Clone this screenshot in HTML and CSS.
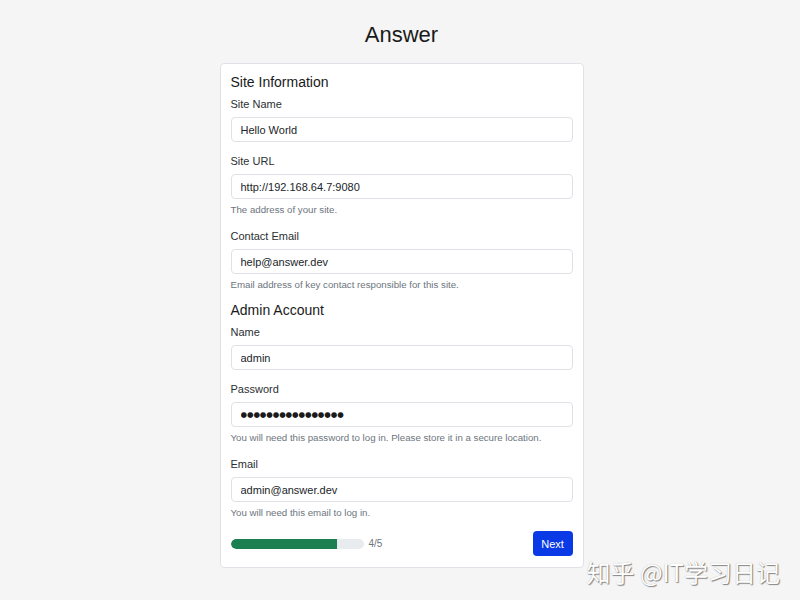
FILE: index.html
```html
<!DOCTYPE html>
<html lang="en">
<head>
<meta charset="utf-8">
<title>Answer</title>
<link rel="stylesheet" href="styles.css">
</head>
<body>
<main class="page">
  <h1 class="title">Answer</h1>
  <form class="card">
    <h2 class="section">Site Information</h2>
    <div class="group">
      <label class="label">Site Name</label>
      <input class="input" type="text" value="Hello World">
    </div>
    <div class="group">
      <label class="label">Site URL</label>
      <input class="input" type="text" value="http://192.168.64.7:9080">
      <div class="help">The address of your site.</div>
    </div>
    <div class="group">
      <label class="label">Contact Email</label>
      <input class="input" type="text" value="help@answer.dev">
      <div class="help">Email address of key contact responsible for this site.</div>
    </div>
    <h2 class="section">Admin Account</h2>
    <div class="group">
      <label class="label">Name</label>
      <input class="input" type="text" value="admin">
    </div>
    <div class="group">
      <label class="label">Password</label>
      <input class="input pw" type="text" value="●●●●●●●●●●●●●●●●">
      <div class="help">You will need this password to log in. Please store it in a secure location.</div>
    </div>
    <div class="group">
      <label class="label">Email</label>
      <input class="input" type="text" value="admin@answer.dev">
      <div class="help">You will need this email to log in.</div>
    </div>
    <div class="footer">
      <div class="progress-wrap">
        <div class="progress"><div class="bar" style="width: 80%"></div></div>
        <span class="step">4/5</span>
      </div>
      <button type="button" class="btn">Next</button>
    </div>
  </form>
</main>
<div class="watermark">知乎 @IT学习日记</div>
</body>
</html>
```

FILE: styles.css
```css
* { box-sizing: border-box; }
html, body {
  margin: 0;
  padding: 0;
  background: #f5f5f5;
  font-family: "Liberation Sans", Arial, sans-serif;
  color: #212529;
}
body { height: 600px; overflow: hidden; position: relative; }
.page {
  padding-top: 21px;
  padding-left: 3px;
  display: flex;
  flex-direction: column;
  align-items: center;
}
.title {
  margin: 0 0 14px;
  font-size: 22px;
  line-height: 28px;
  font-weight: 400;
  color: #1a1a1a;
}
.card {
  width: 364px;
  background: #fff;
  border: 1px solid #dfe2e6;
  border-radius: 4px;
  padding: 9px 10px 11px;
  margin: 0;
}
.section {
  margin: 0 0 5px;
  font-size: 14px;
  line-height: 18px;
  font-weight: 400;
  color: #1a1a1a;
}
.group + .section { margin-top: -2px; }
.group { margin-bottom: 11px; }
.label {
  display: block;
  font-size: 11px;
  line-height: 16px;
  margin-bottom: 5px;
  color: #2b2f33;
}
.input {
  display: block;
  width: 100%;
  height: 25px;
  padding: 0 9px;
  border: 1px solid #dee2e6;
  border-radius: 4px;
  background: #fff;
  font-family: "Liberation Sans", Arial, sans-serif;
  font-size: 11px;
  color: #212529;
  outline: none;
}
.pw {
  font-family: "DejaVu Sans", sans-serif;
  font-size: 7.5px;
  letter-spacing: -0.1px;
  color: #1a1a1a;
}
.help {
  margin-top: 4px;
  font-size: 9.7px;
  line-height: 14px;
  color: #6c757d;
}
.footer {
  display: flex;
  align-items: center;
  justify-content: space-between;
  height: 25px;
}
.progress-wrap {
  display: flex;
  align-items: center;
  gap: 5px;
}
.progress {
  width: 133px;
  height: 10px;
  background: #e9ecef;
  border-radius: 5px;
  overflow: hidden;
}
.bar {
  height: 100%;
  background: #1b7f52;
  border-radius: 5px 0 0 5px;
}
.step {
  font-size: 10px;
  color: #6c757d;
}
.btn {
  width: 40px;
  height: 25px;
  border: none;
  border-radius: 4px;
  background: #0a3ae6;
  color: #fff;
  font-family: "Liberation Sans", Arial, sans-serif;
  font-size: 11px;
  padding: 0;
}
.watermark {
  position: absolute;
  right: 20px;
  bottom: 13px;
  font-family: "Noto Sans CJK SC", "Liberation Sans", sans-serif;
  font-size: 24px;
  line-height: 30px;
  color: #fff;
  text-shadow: 1px 1px 1px rgba(0,0,0,0.45), 0 0 1px rgba(0,0,0,0.3);
}
```
